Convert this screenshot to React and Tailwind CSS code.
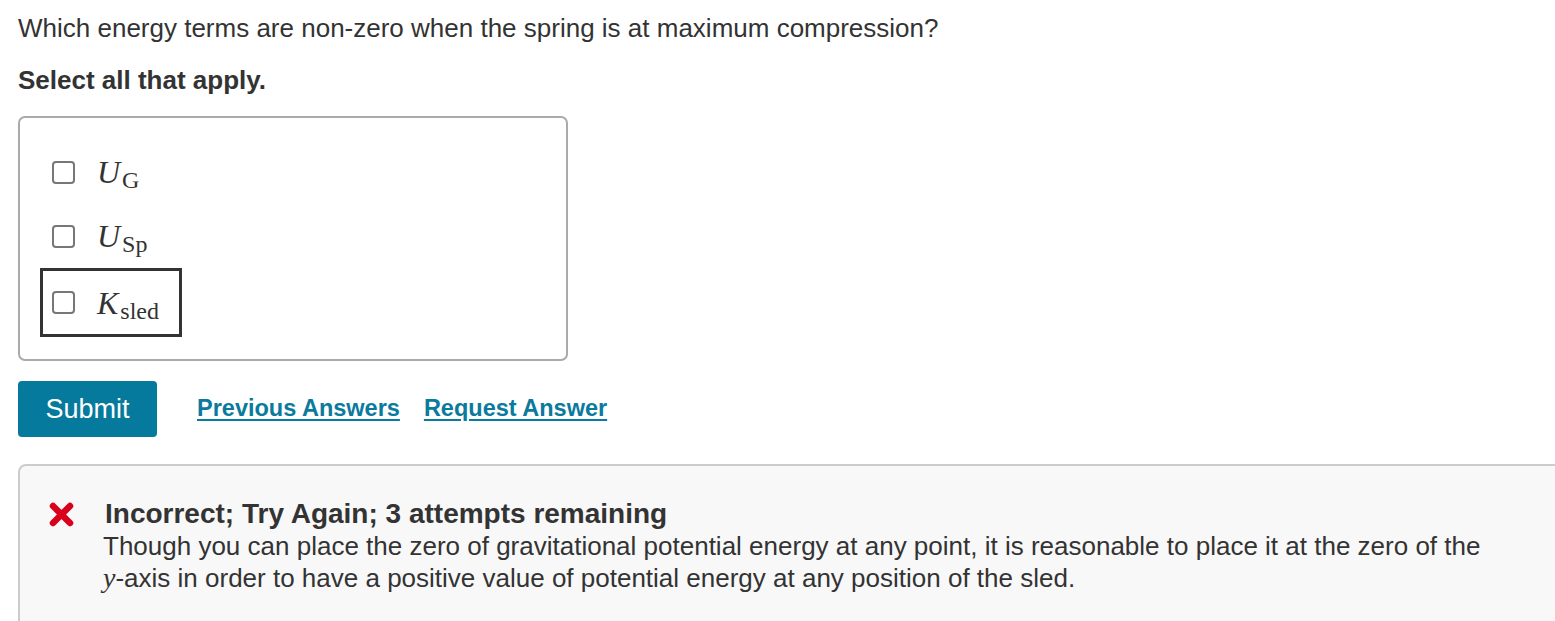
import React from 'react';

const sans = { fontFamily: '"Liberation Sans", Arial, sans-serif' };
const serif = { fontFamily: '"Liberation Serif", "Times New Roman", serif' };

const Math = ({ main, sub }) => (
  <span className="text-[32px] leading-none text-[#333]" style={serif}>
    <i>{main}</i>
    <span className="relative top-[5px] ml-[2px] text-[24px]">{sub}</span>
  </span>
);

const Option = ({ main, sub, focused }) => (
  <label
    className={`flex w-fit items-center gap-[22px] border-[3px] pl-[9px] pr-[20px] ${
      focused ? 'h-[69px] border-[#333]' : 'h-[64px] border-transparent'
    }`}
  >
    <span className="block h-[23px] w-[23px] rounded-[4px] border-2 border-[#777] bg-white" />
    <Math main={main} sub={sub} />
  </label>
);

export default function App() {
  return (
    <div className="h-[621px] w-[1555px] overflow-hidden bg-white text-[#333]" style={sans}>
      <div className="pl-[18px] pt-[13px]">
        <p className="text-[26px] leading-[30px]">
          Which energy terms are non-zero when the spring is at maximum compression?
        </p>
        <p className="mt-[22px] text-[26px] font-bold leading-[30px]">Select all that apply.</p>

        <div className="mt-[21px] flex h-[245px] w-[550px] flex-col rounded-[7px] border-2 border-[#aaa] pl-[20px] pt-[22px]">
          <Option main="U" sub="G" />
          <Option main="U" sub="Sp" />
          <Option main="K" sub="sled" focused />
        </div>

        <div className="mt-[20px] flex items-center">
          <button className="h-[56px] w-[139px] rounded-[4px] bg-[#067a9c] text-[27px] text-white">
            Submit
          </button>
          <a href="#" className="ml-[40px] text-[23.5px] font-bold text-[#0a7a9e] underline underline-offset-[3px]">
            Previous Answers
          </a>
          <a href="#" className="ml-[24px] text-[23.5px] font-bold text-[#0a7a9e] underline underline-offset-[3px]">
            Request Answer
          </a>
        </div>

        <div className="mt-[27px] flex h-[180px] w-[1560px] rounded-tl-[8px] rounded-bl-[8px] border-2 border-[#ccc] bg-[#f8f8f8] pl-[28px] pt-[33px]">
          <svg width="27" height="27" viewBox="0 0 27 27" className="mt-[2px] shrink-0">
            <path d="M5 5 L22 22 M22 5 L5 22" stroke="#d9001b" strokeWidth="6.5" strokeLinecap="round" />
          </svg>
          <div className="ml-[30px]">
            <p className="text-[28px] font-bold leading-[30px]">Incorrect; Try Again; 3 attempts remaining</p>
            <p className="-ml-[2px] mt-[2px] text-[26px] leading-[31px]">
              Though you can place the zero of gravitational potential energy at any point, it is reasonable to place it at the zero of the
              <br />
              <i className="text-[28px]" style={serif}>y</i>-axis in order to have a positive value of potential energy at any position of the sled.
            </p>
          </div>
        </div>
      </div>
    </div>
  );
}
